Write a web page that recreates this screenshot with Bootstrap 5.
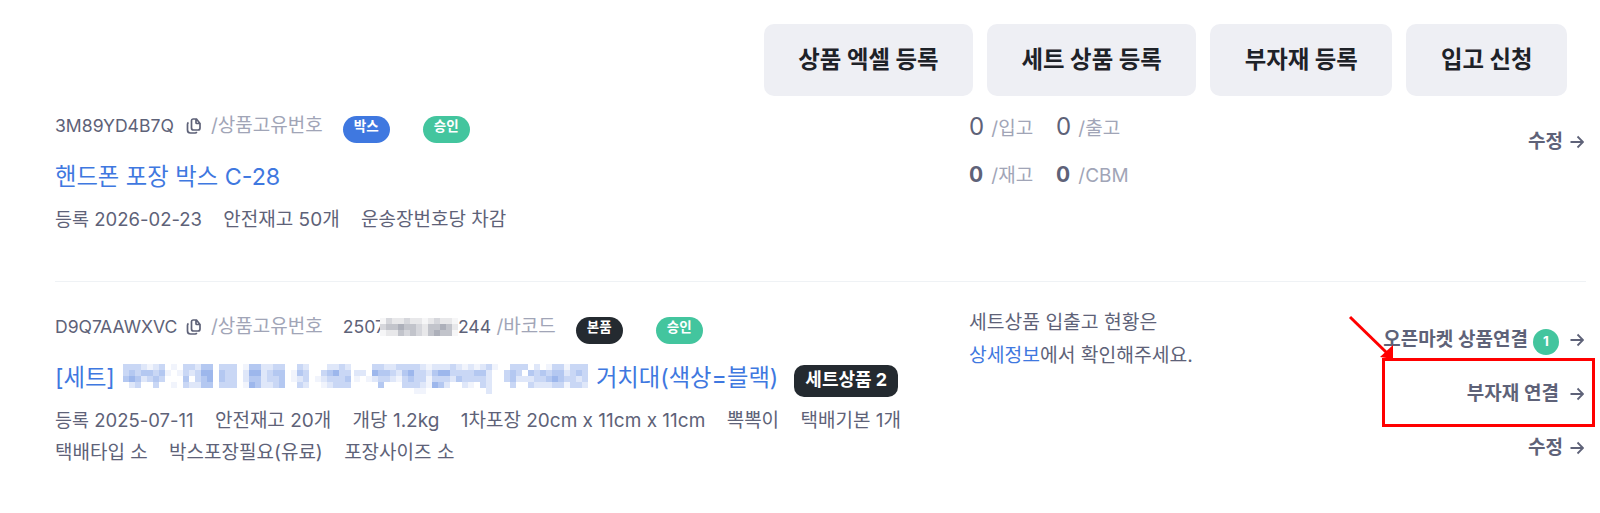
<!DOCTYPE html>
<html lang="ko">
<head>
    <meta charset="UTF-8">
    <title>상품 목록</title>
    <link href="https://cdn.jsdelivr.net/npm/bootstrap@5.3.0/dist/css/bootstrap.min.css" rel="stylesheet">
    <style>
        body {
            font-family: Inter, "Noto Sans CJK KR", sans-serif;
            font-size: 19px;
            color: #5e6278;
            background: #fff;
            position: relative;
            height: 513px;
            overflow: hidden;
        }
        .page-wrap { padding: 24px 14px 0 55px; }
        .top-buttons { column-gap: 14px; padding-right: 19px; }
        .top-btn {
            height: 72px;
            border-radius: 10px;
            background: #eeeff4;
            color: #1e2228;
            font-size: 23.4px;
            font-weight: 700;
            border: 0;
            padding: 0 34.5px;
        }
        .top-btn:hover { background: #e4e6ef; color: #1e2228; }
        .product-row { display: flex; }
        .product-row.first { margin-top: 15px; height: 171px; border-bottom: 1px solid #eff2f5; }
        .product-row.second { padding-top: 30px; }
        .info-col { width: 914px; flex: none; }
        .stock-col { flex: 1 1 auto; margin-top: -8px; }
        .link-col { width: 230px; flex: none; text-align: right; padding-right: 2px; }
        .id-line { height: 30px; display: flex; align-items: center; line-height: 30px; white-space: nowrap; }
        .id-code { font-size: 17.6px; }
        .id-code.fixed { width: 121px; flex: none; }
        .barcode-text { margin-left: 20px; }
        .label-muted { color: #a1a5b7; }
        .copy-icon { margin: 0 9px 0 10px; width: 16px; height: 16px; flex: none; }
        .state-pill {
            display: inline-block;
            width: 47px;
            height: 27px;
            line-height: 21px;
            text-align: center;
            border-radius: 14px;
            color: #fff;
            font-size: 13.5px;
            font-weight: 700;
            margin-top: 7px;
            margin-left: 33px;
            flex: none;
        }
        .state-pill.after-label { margin-left: 20px; }
        .pill-blue { background: #3f78e0; }
        .pill-green { background: #43c59e; }
        .pill-dark { background: #242a30; }
        .title-link {
            color: #3f78e0;
            font-size: 23.3px;
            text-decoration: none;
            line-height: 34px;
        }
        .title-line { display: flex; align-items: center; margin-top: 19px; height: 34px; white-space: nowrap; }
        .set-pill {
            background: #242a30;
            color: #fff;
            font-size: 18px;
            font-weight: 700;
            border-radius: 10px;
            height: 32px;
            line-height: 29px;
            padding: 0 11px;
            margin-left: 16px;
            margin-top: 6px;
        }
        .meta-line { line-height: 33px; margin-top: 9px; height: 33px; white-space: nowrap; }
        .meta-line.next { margin-top: 0; line-height: 31px; }
        .meta-line span { margin-right: 16px; }
        .meta-line .reg-date { font-size: 18.5px; }
        .stat-num { font-size: 24px; display: inline-block; width: 17px; }
        .stat-num.strong { font-weight: 700; font-size: 21px; }
        .stat-cell { width: 87px; white-space: nowrap; }
        .stat-line { height: 48px; display: flex; align-items: center; }
        .notice-line { line-height: 33px; font-size: 19.3px; }
        .notice-first { margin-top: 2px; }
        .link-item {
            color: #5e6278;
            font-weight: 600;
            font-size: 19px;
            text-decoration: none;
            display: flex;
            justify-content: flex-end;
            align-items: center;
            height: 28px;
        }
        .link-item + .link-item { margin-top: 26px; }
        .link-item.edit-only { margin-top: 17px; }
        .link-item.market { margin-top: 14px; }
        .link-item svg { margin-left: 11px; flex: none; }
        .link-item.short-label svg { margin-left: 7px; }
        .count-dot {
            width: 26px;
            height: 26px;
            border-radius: 50%;
            background: #43c59e;
            color: #fff;
            font-size: 13.5px;
            font-weight: 700;
            text-align: center;
            line-height: 25px;
            margin: 4px 0 0 5px;
        }
        .mosaic-blue { display: block; margin: 2px 8px 0 8px; flex: none; }
        .mosaic-gray { display: inline-block; vertical-align: -3px; margin-left: -5px; }
        .notice-link { color: #3f78e0; text-decoration: none; }
        .red-box {
            position: absolute;
            left: 1382px;
            top: 358px;
            width: 213px;
            height: 69px;
            border: 3px solid #f00;
        }
        .red-arrow { position: absolute; left: 1340px; top: 305px; }
    </style>
</head>
<body>
    <div class="page-wrap">
        <div class="d-flex justify-content-end top-buttons">
            <button class="btn top-btn">상품 엑셀 등록</button>
            <button class="btn top-btn">세트 상품 등록</button>
            <button class="btn top-btn">부자재 등록</button>
            <button class="btn top-btn">입고 신청</button>
        </div>

        <div class="product-row first">
            <div class="info-col">
                <div class="id-line">
                    <span class="id-code fixed">3M89YD4B7Q</span>
                    <svg class="copy-icon" viewBox="0 0 16 16" fill="none" stroke="#5e6278" stroke-width="1.7"><path d="M5.500 2.600V10a2 2 0 0 0 2 2h4.500a2 2 0 0 0 2-2V5.500L10.500 1H7a1.600 1.600 0 0 0-1.500 1.600zM10 1.500v3.200a.8.8 0 0 0 .8.8H14"/><path d="M2.500 4.600A2 2 0 0 0 1.500 6.400V12a3 3 0 0 0 3 3H9a2 2 0 0 0 1.800-1"/></svg>
                    <span class="label-muted">/상품고유번호</span>
                    <span class="state-pill pill-blue after-label">박스</span>
                    <span class="state-pill pill-green">승인</span>
                </div>
                <div class="title-line"><a class="title-link" href="#">핸드폰 포장 박스 C-28</a></div>
                <div class="meta-line"><span class="reg-date">등록 2026-02-23</span> <span>안전재고 50개</span> <span>운송장번호당 차감</span></div>
            </div>
            <div class="stock-col">
                <div class="stat-line">
                    <div class="stat-cell"><span class="stat-num">0</span> <span class="label-muted">/입고</span></div>
                    <div class="stat-cell"><span class="stat-num">0</span> <span class="label-muted">/출고</span></div>
                </div>
                <div class="stat-line">
                    <div class="stat-cell"><span class="stat-num strong">0</span> <span class="label-muted">/재고</span></div>
                    <div class="stat-cell"><span class="stat-num strong">0</span> <span class="label-muted">/CBM</span></div>
                </div>
            </div>
            <div class="link-col">
                <a class="link-item edit-only short-label" href="#">수정
                    <svg width="14" height="14" viewBox="0 0 14 14" fill="none" stroke="#5e6278" stroke-width="1.8"><path d="M.5 7h12.500M7.500 1.500 13 7l-5.500 5.500"/></svg>
                </a>
            </div>
        </div>

        <div class="product-row second">
            <div class="info-col">
                <div class="id-line">
                    <span class="id-code fixed">D9Q7AAWXVC</span>
                    <svg class="copy-icon" viewBox="0 0 16 16" fill="none" stroke="#5e6278" stroke-width="1.7"><path d="M5.500 2.600V10a2 2 0 0 0 2 2h4.500a2 2 0 0 0 2-2V5.500L10.500 1H7a1.600 1.600 0 0 0-1.500 1.600zM10 1.500v3.200a.8.8 0 0 0 .8.8H14"/><path d="M2.500 4.600A2 2 0 0 0 1.500 6.400V12a3 3 0 0 0 3 3H9a2 2 0 0 0 1.800-1"/></svg>
                    <span class="label-muted">/상품고유번호</span>
                    <span class="id-code barcode-text">2507<svg class="mosaic-gray" id="mosaicGray" width="78" height="18"></svg>244</span>
                    <span class="label-muted">&nbsp;/바코드</span>
                    <span class="state-pill pill-dark after-label">본품</span>
                    <span class="state-pill pill-green">승인</span>
                </div>
                <div class="title-line">
                    <a class="title-link" href="#">[세트]</a>
                    <svg class="mosaic-blue" id="mosaicBlue" width="465" height="30"></svg>
                    <a class="title-link" href="#">거치대(색상=블랙)</a>
                    <span class="set-pill">세트상품 2</span>
                </div>
                <div class="meta-line"><span class="reg-date">등록 2025-07-11</span> <span>안전재고 20개</span> <span>개당 1.2kg</span> <span>1차포장 20cm x 11cm x 11cm</span> <span>뽁뽁이</span> <span>택배기본 1개</span></div>
                <div class="meta-line next"><span>택배타입 소</span> <span>박스포장필요(유료)</span> <span>포장사이즈 소</span></div>
            </div>
            <div class="stock-col">
                <div class="notice-line notice-first">세트상품 입출고 현황은</div>
                <div class="notice-line"><a class="notice-link" href="#">상세정보</a>에서 확인해주세요.</div>
            </div>
            <div class="link-col">
                <a class="link-item market" href="#">오픈마켓 상품연결<span class="count-dot">1</span>
                    <svg width="14" height="14" viewBox="0 0 14 14" fill="none" stroke="#5e6278" stroke-width="1.8"><path d="M.5 7h12.500M7.500 1.500 13 7l-5.500 5.500"/></svg>
                </a>
                <a class="link-item" href="#">부자재 연결
                    <svg width="14" height="14" viewBox="0 0 14 14" fill="none" stroke="#5e6278" stroke-width="1.8"><path d="M.5 7h12.500M7.500 1.500 13 7l-5.500 5.500"/></svg>
                </a>
                <a class="link-item short-label" href="#">수정
                    <svg width="14" height="14" viewBox="0 0 14 14" fill="none" stroke="#5e6278" stroke-width="1.8"><path d="M.5 7h12.500M7.500 1.500 13 7l-5.500 5.500"/></svg>
                </a>
            </div>
        </div>
    </div>

    <div class="red-box"></div>
    <svg class="red-arrow" width="60" height="60" viewBox="0 0 60 60">
        <path d="M10 12 47 48" stroke="#f00" stroke-width="3"/>
        <path d="M53 54 53 40 40 52z" fill="#f00"/>
    </svg>

    <script>
        // blurred-out text, 6px cells, one string per row of shade indexes
        const blueShades = ['#ffffff', '#f1f4fc', '#dfe7f9', '#c9d7f5', '#b4c8f1', '#9db7ec'];
        const grayShades = ['#f6f6f7', '#e8e8ea', '#d6d7dc', '#c2c4cb', '#adb0ba'];

        function drawCells(svg, rows, shades, offsetX) {
            let html = '';
            rows.forEach((row, y) => {
                [...row].forEach((level, x) => {
                    if (level === '0' && shades === blueShades) return;
                    html += `<rect x="${offsetX + x * 6}" y="${y * 6}" width="6" height="6" fill="${shades[+level]}"/>`;
                });
            });
            svg.innerHTML += html;
        }

        const blueSvg = document.getElementById('mosaicBlue');
        drawCells(blueSvg, [
            '33321230103324403330144223300320002232',
            '34344341013235504330255234401430034533',
            '45423430004034504330244233401230123334',
            '02300300103224403330154223400320012333'
        ], blueShades, 0);
        drawCells(blueSvg, [
            '000332233332122232121231003330201331333',
            '220544324533245533334420034304343442343',
            '101233213433133324333320034222334543323',
            '000040003332154200210320003003222331332',
            '000000000011000000000020000000000000000'
        ], blueShades, 231);

        drawCells(document.getElementById('mosaicGray'), [
            '0211211012110',
            '2334332133431',
            '0113232134330'
        ], grayShades, 0);
    </script>
    <script src="https://cdn.jsdelivr.net/npm/bootstrap@5.3.0/dist/js/bootstrap.bundle.min.js"></script>
</body>
</html>
